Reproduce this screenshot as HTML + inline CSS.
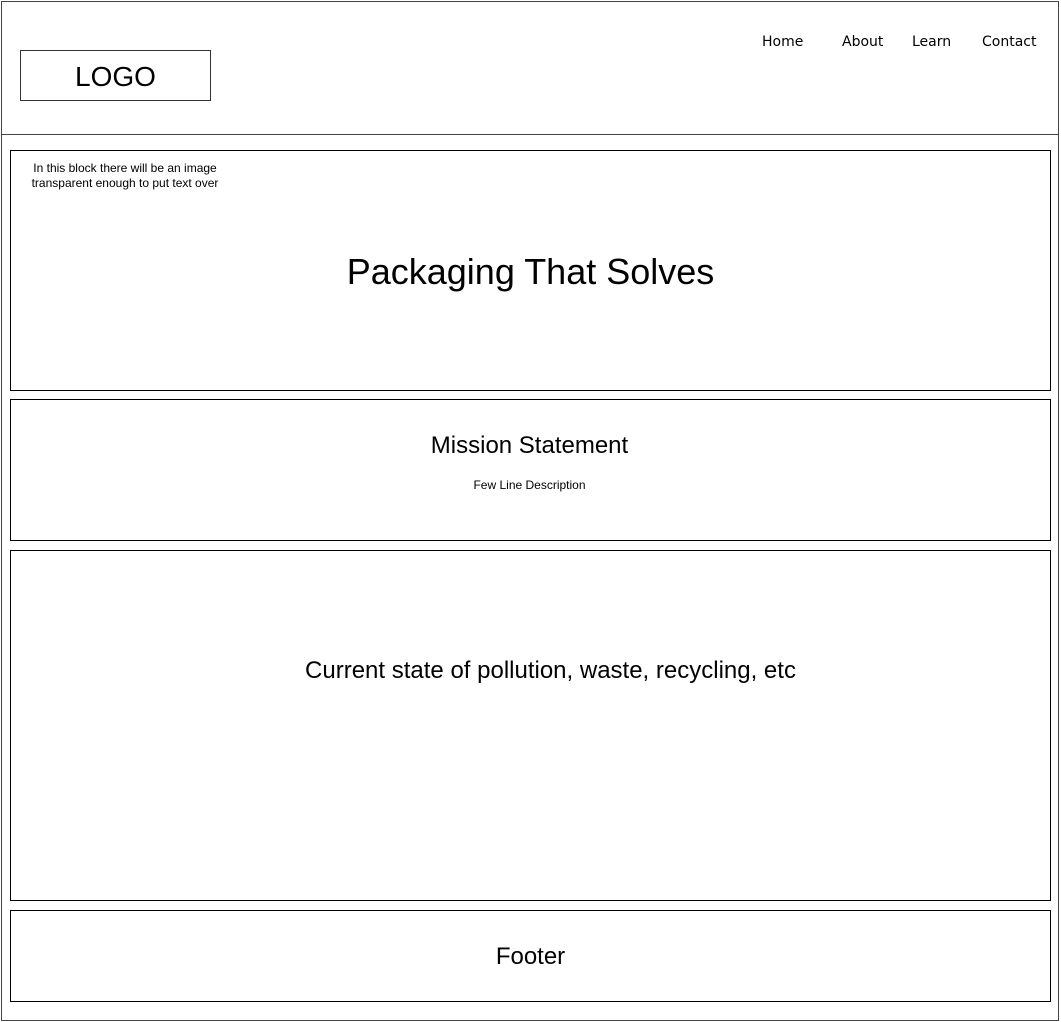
<!DOCTYPE html>
<html><head><style>
body{margin:0;width:1061px;height:1022px;position:relative;background:#fff;font-family:"Liberation Sans",Arial,sans-serif;color:#000;overflow:hidden}
.a{position:absolute;box-sizing:border-box}
.b{border:1px solid #000}
.c{text-align:center}
.nav{font-family:"DejaVu Sans",sans-serif;font-size:14px;top:34px}
</style></head><body>
<div class="a" style="left:1px;top:1px;width:1058px;height:1020px;border:1.5px solid #444"></div>
<div class="a" style="left:1px;top:134px;width:1058px;height:0;border-top:1.5px solid #444"></div>
<div class="a" style="left:20px;top:50px;width:191px;height:51px;border:1.5px solid #333"></div>
<div class="a c" style="left:20px;top:59px;width:191px;font-size:28px;line-height:36px">LOGO</div>
<div class="a nav" style="left:762px">Home</div>
<div class="a nav" style="left:842px">About</div>
<div class="a nav" style="left:912px">Learn</div>
<div class="a nav" style="left:982px">Contact</div>
<div class="a b" style="left:10px;top:150px;width:1041px;height:241px"></div>
<div class="a c" style="left:20px;top:161px;width:210px;font-size:12px;line-height:15px">In this block there will be an image transparent enough to put text over</div>
<div class="a c" style="left:10px;top:250px;width:1041px;font-size:36px;line-height:44px">Packaging That Solves</div>
<div class="a b" style="left:10px;top:399px;width:1041px;height:142px"></div>
<div class="a c" style="left:10px;top:431px;width:1039px;font-size:24px;line-height:30px">Mission Statement</div>
<div class="a c" style="left:10px;top:477px;width:1039px;font-size:12px;line-height:16px">Few Line Description</div>
<div class="a b" style="left:10px;top:550px;width:1041px;height:351px"></div>
<div class="a c" style="left:10px;top:656px;width:1081px;font-size:24px;line-height:30px">Current state of pollution, waste, recycling, etc</div>
<div class="a b" style="left:10px;top:910px;width:1041px;height:92px"></div>
<div class="a c" style="left:10px;top:942px;width:1041px;font-size:24px;line-height:30px">Footer</div>
</body></html>
